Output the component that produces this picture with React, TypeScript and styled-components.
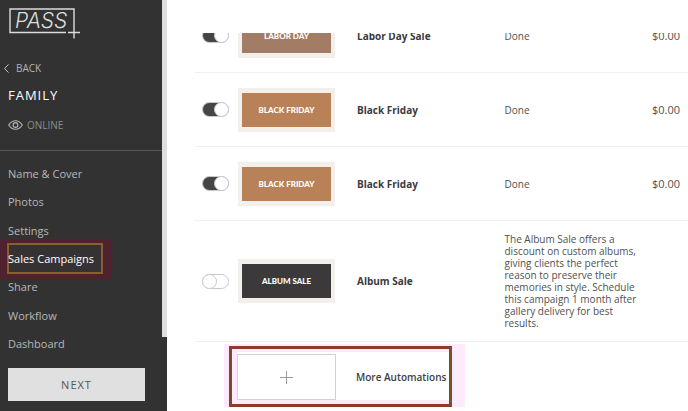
import React from 'react';
import styled, { createGlobalStyle } from 'styled-components';

const GlobalStyle = createGlobalStyle`
  *, *::before { box-sizing: border-box; }
  body { margin: 0; background: #fff; font-family: "Open Sans", "Noto Sans", sans-serif; }
  button { font: inherit; border: 0; padding: 0; background: none; cursor: pointer; }
  a { color: inherit; text-decoration: none; }
`;

const Page = styled.div`
  display: grid;
  grid-template-columns: 167px minmax(0, 1fr);
  height: 100vh;
  overflow: hidden;
`;

const Sidebar = styled.aside`
  display: grid;
  grid-template-columns: minmax(0, 1fr) 5px;
  min-height: 0;
  background: #323232;
  color: #b4b4b4;
`;

const SidebarBody = styled.div`
  display: flex;
  flex-direction: column;
  min-height: 0;
`;

const ScrollThumb = styled.div`
  height: 82%;
  background: #dedede;
`;

const Logo = styled.svg`
  width: 72px;
  height: 32px;
  margin: 7px 0 0 9px;
  flex: none;
`;

const BackLink = styled.a`
  display: flex;
  align-items: center;
  gap: 7px;
  margin: 21px 0 0 4px;
  font-size: 10px;
  line-height: 16px;
`;

const Title = styled.h1`
  margin: 9px 0 0 8px;
  color: #fff;
  font-size: 13px;
  line-height: 20px;
  font-weight: 500;
  letter-spacing: 1px;
`;

const Status = styled.div`
  display: flex;
  align-items: center;
  gap: 4px;
  margin: 12px 0 0 8px;
  font-size: 10px;
  line-height: 16px;
  color: #8d8d8d;
`;

const Nav = styled.nav`
  display: flex;
  flex: 1;
  flex-direction: column;
  min-height: 0;
  margin-top: 17px;
  padding-top: 8px;
  border-top: 1px solid #585858;
`;

const NavLink = styled.a<{ $active?: boolean }>`
  position: relative;
  z-index: 0;
  display: flex;
  flex: 1;
  align-items: center;
  padding-left: 8px;
  font-size: 11px;
  color: ${p => (p.$active ? '#fff' : '#b8b8b8')};
`;

const NavHighlight = styled.span`
  position: absolute;
  z-index: -1;
  inset: -5px 51px -6px 0;
  padding: 4px 8px 5px 7px;
  background: #50212f;

  &::before {
    content: "";
    display: block;
    height: 100%;
    border: 2px solid #89602a;
    background: #363133;
  }
`;

const NextButton = styled.button`
  && {
    margin: 10px 17px 10px 8px;
    background: #e0e0e0;
    color: #555;
    font-size: 11px;
    line-height: 33px;
    letter-spacing: 1px;
  }
`;

const Main = styled.main`
  padding: 33px 0 0 28px;
  min-height: 0;
  overflow: hidden;
`;

const CampaignViewport = styled.div`
  overflow: hidden;
`;

const Campaigns = styled.table`
  width: 100%;
  margin-top: -34px;
  table-layout: fixed;
  border-collapse: separate;
  border-spacing: 0;
`;

const Col = styled.col<{ $width?: number }>`
  width: ${p => (p.$width ? `${p.$width}px` : 'auto')};
`;

const Cell = styled.td<{ $tall?: boolean; $inset?: boolean; $amount?: boolean }>`
  height: ${p => (p.$tall ? 121 : 74)}px;
  padding: 0 0 0 ${p => (p.$inset ? 7 : 0)}px;
  border-bottom: 1px solid #f1f1f1;
  vertical-align: middle;
  color: #505050;
  font-size: ${p => (p.$amount ? 11 : 10)}px;
  line-height: 12px;
`;

const Name = styled.span`
  color: #3a3a3d;
  font-size: 10px;
  font-weight: 700;
`;

const Description = styled.p`
  max-width: 140px;
  margin: 0;
`;

const Toggle = styled.input`
  appearance: none;
  display: block;
  width: 27px;
  height: 15px;
  margin: 0;
  border: 1px solid #c9c9c9;
  border-radius: 8px;
  background: #fff;

  &::before {
    content: "";
    display: block;
    width: 15px;
    height: 15px;
    margin: -1px;
    border: 1px solid #c9c9c9;
    border-radius: 50%;
    background: #fff;
  }

  &:checked { background: #454547; }
  &:checked::before { margin-left: 11px; }
`;

const Thumb = styled.div<{ $color: string }>`
  width: 97px;
  height: 44px;
  border: solid #f3f0eb;
  border-width: 5px 4px;
  background: ${p => p.$color};
  color: #fff;
  font-family: Lato, sans-serif;
  font-size: 8px;
  font-weight: 900;
  line-height: 34px;
  text-align: center;
`;

const Callout = styled.div`
  width: fit-content;
  margin: 2px 0 0 29px;
  padding: 2px 13px 0 5px;
  background: #fdeafd;
`;

const CalloutFrame = styled.div`
  padding: 3px 0 4px 5px;
  border: 3px solid;
  border-color: #8c3c29 #795029 #8c3c29 #7b482b;
`;

const MoreButton = styled.button`
  && {
    display: flex;
    align-items: center;
    gap: 20px;
    padding: 2px 3px 0 0;
    background: #fff;
    color: #3e3e40;
    font-size: 10px;
    font-weight: 600;
  }
`;

const AddTile = styled.span`
  display: grid;
  place-items: center;
  width: 99px;
  height: 46px;
  border: 1px solid #d2d2d2;
  border-left-color: #f5c9d8;
`;

const campaigns = [
  { name: 'Labor Day Sale', badge: 'LABOR DAY', color: '#a37c66', status: 'Done', total: '$0.00', on: true },
  { name: 'Black Friday', badge: 'BLACK FRIDAY', color: '#b98158', status: 'Done', total: '$0.00', on: true },
  { name: 'Black Friday', badge: 'BLACK FRIDAY', color: '#b98158', status: 'Done', total: '$0.00', on: true },
  {
    name: 'Album Sale',
    badge: 'ALBUM SALE',
    color: '#3b393a',
    status:
      'The Album Sale offers a discount on custom albums, giving clients the perfect reason to preserve their memories in style. Schedule this campaign 1 month after gallery delivery for best results.',
    total: '',
    on: false,
  },
];

const links = ['Name & Cover', 'Photos', 'Settings', 'Sales Campaigns', 'Share', 'Workflow', 'Dashboard'];

export default function App() {
  return (
    <Page>
      <GlobalStyle />
      <Sidebar>
        <SidebarBody>
          <Logo viewBox="0 0 72 32" fill="none" stroke="#dcdcdc" strokeWidth="1.4">
            <path d="M57 25.5H1V2h64v20M59 25.5h12M65 20.5v11" />
            <text x="6" y="21" fill="#dcdcdc" stroke="none" fontFamily="Inter" fontSize="21" fontStyle="italic" fontWeight="300">
              PASS
            </text>
          </Logo>
          <BackLink href="#back">
            <svg width="5" height="9" viewBox="0 0 5 9" fill="none" stroke="#c4c4c4">
              <path d="M4.5.5l-4 4 4 4" />
            </svg>
            BACK
          </BackLink>
          <Title>FAMILY</Title>
          <Status>
            <svg width="15" height="10" viewBox="0 0 15 10" fill="none" stroke="#b5b5b5" strokeWidth="1.1">
              <path d="M.7 5C2.5 2.2 4.8.7 7.5.7S12.5 2.2 14.3 5C12.5 7.8 10.2 9.3 7.5 9.3S2.500 7.800.7 5z" />
              <circle cx="7.5" cy="5" r="2.4" />
            </svg>
            ONLINE
          </Status>
          <Nav>
            {links.map(label => {
              const active = label === 'Sales Campaigns';
              return (
                <NavLink key={label} href="#" $active={active}>
                  {active && <NavHighlight />}
                  {label}
                </NavLink>
              );
            })}
          </Nav>
          <NextButton>NEXT</NextButton>
        </SidebarBody>
        <ScrollThumb />
      </Sidebar>
      <Main>
        <CampaignViewport>
          <Campaigns>
            <colgroup>
              <Col $width={43} />
              <Col $width={119} />
              <Col />
              <Col />
              <Col $width={36} />
            </colgroup>
            <tbody>
              {campaigns.map((c, i) => (
                <tr key={i}>
                  <Cell $inset $tall={!c.total}>
                    <Toggle type="checkbox" defaultChecked={c.on} aria-label={c.name} />
                  </Cell>
                  <Cell>
                    <Thumb $color={c.color}>{c.badge}</Thumb>
                  </Cell>
                  <Cell>
                    <Name>{c.name}</Name>
                  </Cell>
                  <Cell>
                    <Description>{c.status}</Description>
                  </Cell>
                  <Cell $amount>{c.total}</Cell>
                </tr>
              ))}
            </tbody>
          </Campaigns>
        </CampaignViewport>
        <Callout>
          <CalloutFrame>
            <MoreButton>
              <AddTile>
                <svg width="13" height="13" viewBox="0 0 13 13" stroke="#9a9a9a">
                  <path d="M6.5 0v13M0 6.5h13" />
                </svg>
              </AddTile>
              More Automations
            </MoreButton>
          </CalloutFrame>
        </Callout>
      </Main>
    </Page>
  );
}
